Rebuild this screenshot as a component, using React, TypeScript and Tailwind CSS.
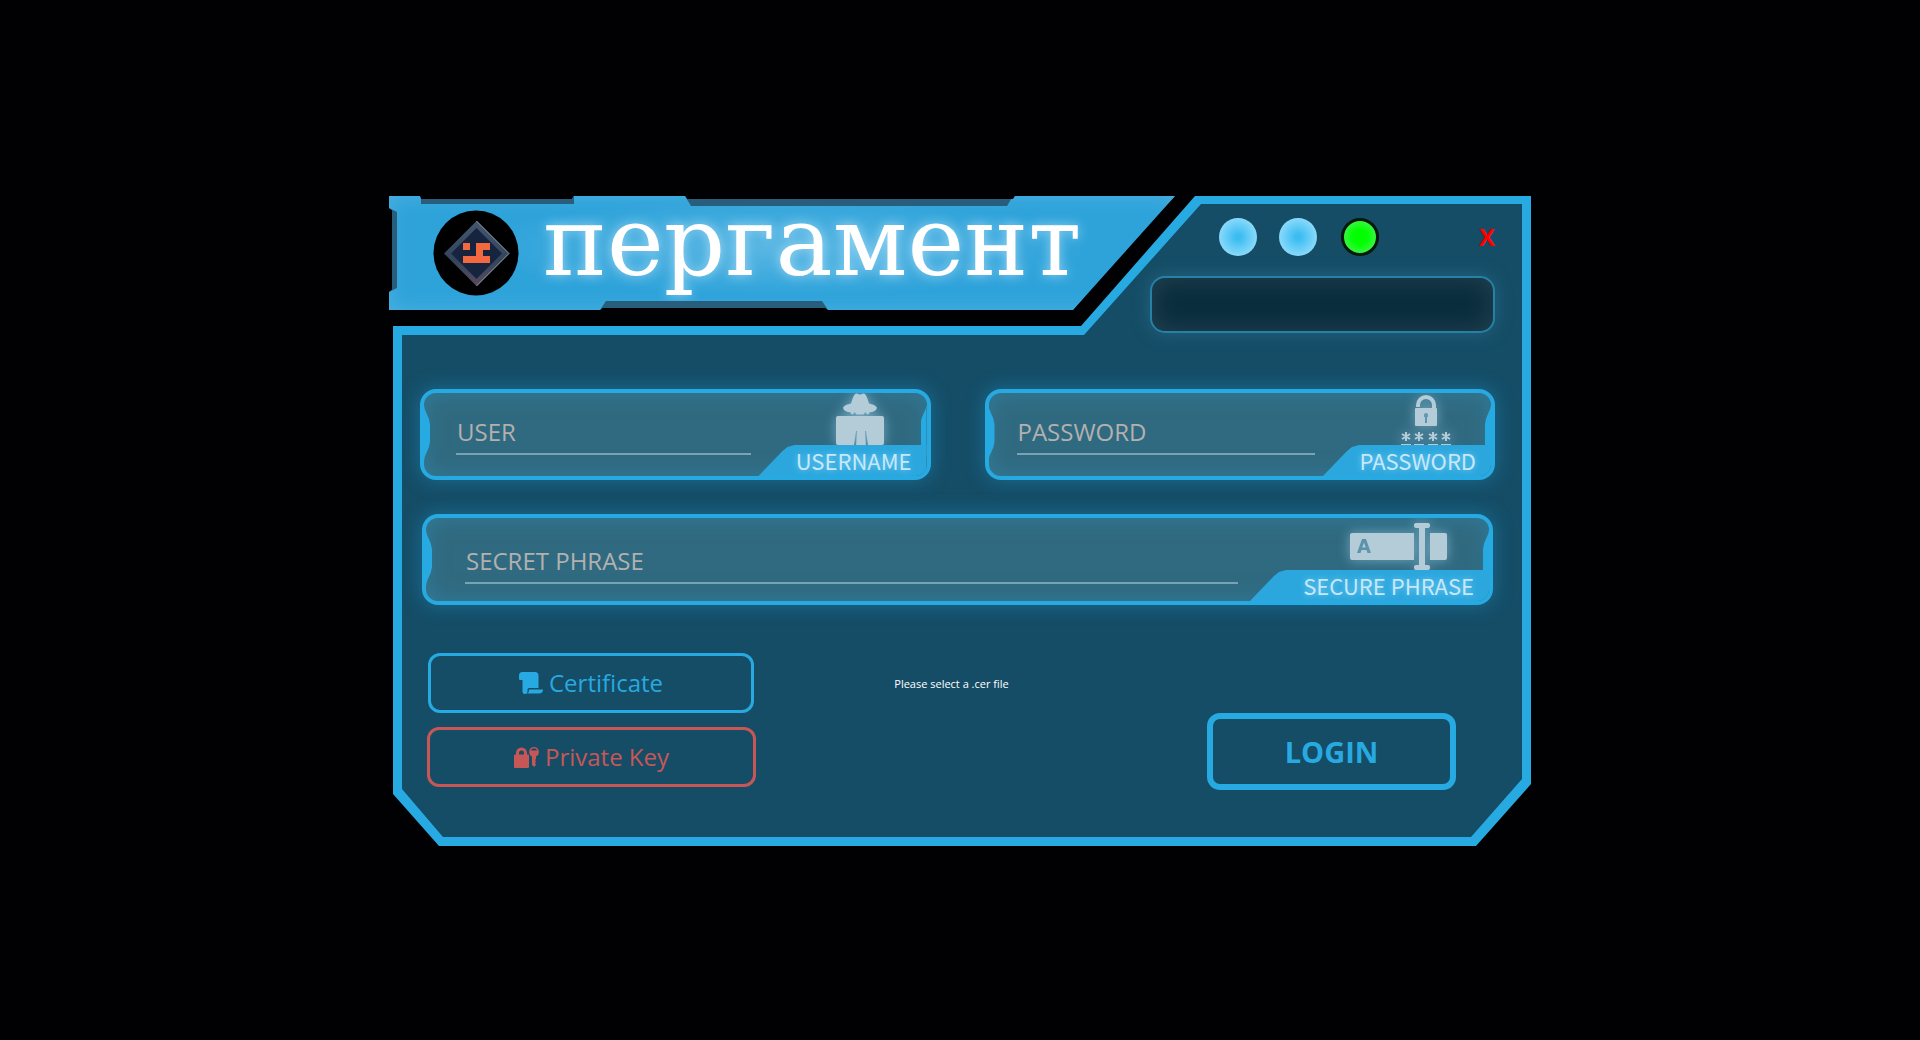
import React from 'react';

const glow = 'fill-[#b4ccd8] drop-shadow-[0_0_6px_rgba(160,210,235,0.6)]';

function LogoMark() {
  return (
    <svg viewBox="0 0 86 86" className="size-[86px] shrink-0" role="img" aria-label="Logo">
      <defs>
        <linearGradient id="rim" x1="0" y1="0" x2="0" y2="1">
          <stop offset="0" stopColor="#44566e" />
          <stop offset="0.6" stopColor="#33455c" />
          <stop offset="1" stopColor="#5a4a5e" />
        </linearGradient>
      </defs>
      <circle cx="43" cy="43" r="42.5" fill="#000" />
      <path d="M43.500 11 76 43.500 43.500 76 11 43.500Z" fill="url(#rim)" />
      <path d="M43.500 11 76 43.500 43.500 76" fill="none" stroke="#9aa6b4" strokeWidth="1" />
      <path d="M43.500 18 69 43.500 43.500 69 18 43.500Z" fill="#16243f" />
      <path d="M30 33h7v7h-7zM43 33h14v7h-7v6h7v7H30v-7h13z" fill="#f4683f" />
    </svg>
  );
}

function SpyIcon() {
  return (
    <svg viewBox="0 0 48 54" className={'h-[54px] w-12 ' + glow} aria-hidden="true">
      <path d="M19 1c2-1.500 3.500.5 5 .5S27-.5 29 1c2 2.500 3 6 4 9.500 3 .8 7 1.800 8 4.500-1 3-4 4-7.500 4.200.3 1.300-.8 2.300-2.500 2.300l-1.500-2.500-2 2.500h-7l-2-2.500-1.500 2.500c-1.700 0-2.800-1-2.500-2.300C11 19 8 18 7 15c1-2.700 5-3.700 8-4.500C16 7 17 3.500 19 1z" />
      <path d="M2 23h44a2 2 0 0 1 2 2v25a2 2 0 0 1-2 2H32l-2-14h-1l1 16H20l1-16h-1l-2 14H2a2 2 0 0 1-2-2V25a2 2 0 0 1 2-2z" />
    </svg>
  );
}

function LockIcon() {
  return (
    <svg viewBox="0 0 52 52" className={'size-[52px] ' + glow} aria-hidden="true">
      <path d="M18 12v-2a8 8 0 0 1 16 0v6" fill="none" stroke="#b4ccd8" strokeWidth="4" />
      <path fillRule="evenodd" d="M16 13h20a1 1 0 0 1 1 1v16a1 1 0 0 1-1 1H16a1 1 0 0 1-1-1V14a1 1 0 0 1 1-1zm10 5a2.500 2.500 0 0 0-1 4.600V28h2v-5.400a2.500 2.500 0 0 0-1-4.600z" />
      <path
        d="M6 37v9M2 39l8 5M10 39l-8 5M19 37v9M15 39l8 5M23 39l-8 5M33 37v9M29 39l8 5M37 39l-8 5M46 37v9M42 39l8 5M50 39l-8 5"
        fill="none"
        stroke="#b4ccd8"
        strokeWidth="2"
      />
      <path d="M1 49h10v2.500H1zM14 49h10v2.500H14zM28 49h10v2.500H28zM41 49h10v2.500H41z" />
    </svg>
  );
}

function PhraseIcon() {
  return (
    <svg viewBox="0 0 98 48" className={'h-12 w-[98px] ' + glow} aria-hidden="true">
      <path fillRule="evenodd" d="M2 10h62v27H2a2 2 0 0 1-2-2V12a2 2 0 0 1 2-2zm10 6L7 30h3.500l1-3h5l1 3H21l-5-14zm2 3.500 1.800 5h-3.600z" />
      <path d="M80 10h15a2 2 0 0 1 2 2v23a2 2 0 0 1-2 2H80z" />
      <path d="M66 0h12a2 2 0 0 1 2 2v1a2 2 0 0 1-2 2h-3v37h3a2 2 0 0 1 2 2v1a2 2 0 0 1-2 2H66a2 2 0 0 1-2-2v-1a2 2 0 0 1 2-2h3V5h-3a2 2 0 0 1-2-2V2a2 2 0 0 1 2-2z" />
    </svg>
  );
}

function ScrollIcon() {
  return (
    <svg viewBox="0 0 24 22" className="h-[22px] w-6 fill-current" aria-hidden="true">
      <path d="M3.500 0H16a3.500 3.500 0 0 1 3.500 3.500V16H10a1.500 1.500 0 0 0-1.500 1.500V19a2.500 2.500 0 0 1-5 1V8H1a1 1 0 0 1-1-1V3.500A3.500 3.500 0 0 1 3.500 0z" />
      <path d="M10 17.500h14a4 4 0 0 1-4 4H8c1.500-.5 2-1.500 2-4z" />
    </svg>
  );
}

function KeyLockIcon() {
  return (
    <svg viewBox="0 0 25 21" className="h-[21px] w-[25px] fill-current" aria-hidden="true">
      <path d="M1 7.500h1V6a5.500 5.500 0 0 1 11 0v1.500h1a1 1 0 0 1 1 1V20a1 1 0 0 1-1 1H1a1 1 0 0 1-1-1V8.500a1 1 0 0 1 1-1zm4 0h5V6a2.500 2.500 0 0 0-5 0z" />
      <path fillRule="evenodd" d="M20 0a5 5 0 0 1 2 9.500V12l-1 1 1 1.500-1 1.500 1 1.500L20.500 20 18 18V9.500A5 5 0 0 1 20 0zm-3 3.500h6c-.5-1.500-1.500-2.200-3-2.200s-2.500.7-3 2.200z" />
    </svg>
  );
}

type FieldProps = {
  id: string;
  caption: string;
  placeholder: string;
  type?: string;
  inputClass: string;
  tabClass: string;
  iconClass: string;
  icon: React.ReactNode;
};

function Field({ id, caption, placeholder, type = 'text', inputClass, tabClass, iconClass, icon }: FieldProps) {
  return (
    <div className="relative flex h-[91px] overflow-hidden rounded-[16px] border-4 border-[#27a9e1] bg-[#306a80] shadow-[0_0_18px_2px_rgba(30,140,190,0.45),inset_0_0_22px_rgba(50,135,170,0.6)]">
      <span className="absolute top-3 left-0 h-[56px] w-1.5 bg-[#27a9e1] [clip-path:polygon(0_0,15%_8%,80%_24%,100%_34%,100%_66%,80%_76%,15%_92%,0_100%)]" />
      <span className="absolute top-3 right-0 h-[50px] w-1.5 bg-[#27a9e1] [clip-path:polygon(100%_0,85%_8%,20%_26%,0_38%,0_100%,100%_100%)]" />
      <div className={'min-w-0 flex-1 ' + inputClass}>
        <input
          id={id}
          type={type}
          placeholder={placeholder}
          className="h-[42px] w-full border-b-2 border-[#78a3b5] bg-transparent px-px pb-1 text-[24px] text-white outline-none placeholder:text-[#b3b1b0]"
        />
      </div>
      <div className={'flex shrink-0 flex-col justify-between ' + tabClass}>
        <div className={'flex h-[52px] justify-end ' + iconClass}>{icon}</div>
        <label
          htmlFor={id}
          className="block h-[31px] bg-[#2ba7de] pr-[15px] text-right font-['Noto_Sans_CJK_SC',sans-serif] text-[22px] leading-[30px] text-[#c5e9fb] [clip-path:polygon(0_100%,24px_6px,29px_2px,36px_0,100%_0,100%_100%)] [text-shadow:0_0_6px_rgba(190,235,255,0.6)]"
        >
          {caption}
        </label>
      </div>
    </div>
  );
}

function Banner() {
  return (
    <div className="relative flex h-[114px] min-w-0 flex-1 items-center bg-[#2ea3da] bg-[radial-gradient(ellipse_at_50%_45%,#5ab7e3_0%,transparent_55%)] pl-11 shadow-[inset_0_0_20px_#4db0e0] [clip-path:polygon(0_0,31px_0,32px_3px,183px_3px,185px_0,296px_0,298px_3px,calc(100%-162px)_3px,calc(100%-160px)_0,100%_0,calc(100%-102px)_100%,calc(100%-347px)_100%,calc(100%-349px)_112px,213px_112px,211px_100%,0_100%,0_96px,3px_94px,3px_14px,0_12px)]">
      <span className="absolute top-0 left-8 h-[8px] w-[153px] bg-[#285d7b]" />
      <span className="absolute top-0 right-[162px] left-[296px] h-[10px] bg-[#285d7b] [clip-path:polygon(0_0,100%_0,calc(100%-6px)_100%,6px_100%)]" />
      <span className="absolute right-[347px] bottom-0 left-[211px] h-[9px] bg-[#285d7b] [clip-path:polygon(6px_0,calc(100%-6px)_0,100%_100%,0_100%)]" />
      <span className="absolute top-3 left-0 h-[84px] w-2 bg-[#285d7b] [clip-path:polygon(0_0,100%_4px,100%_calc(100%-4px),0_100%)]" />
      <LogoMark />
      <h1 className="ml-6 pb-[22px] font-['DejaVu_Serif',serif] text-[96px] leading-[100px] text-white [text-shadow:0_0_12px_rgba(200,235,255,0.7)]">
        пергамент
      </h1>
    </div>
  );
}

export default function App() {
  return (
    <main className="flex min-h-screen items-center justify-center bg-[#010103] pt-0.5 font-['Open_Sans',sans-serif]">
      <form className="relative w-full max-w-[1142px]" onSubmit={(e) => e.preventDefault()}>
        <div className="absolute inset-0 bg-[#27a9e1] [clip-path:polygon(4px_130px,calc(100%-450px)_130px,calc(100%-336px)_0,100%_0,100%_calc(100%-62px),calc(100%-55px)_100%,50px_100%,4px_calc(100%-52px))]">
          <div className="size-full bg-[#154d66] [clip-path:polygon(13px_139px,calc(100%-447px)_139px,calc(100%-330px)_8px,calc(100%-9px)_8px,calc(100%-9px)_calc(100%-67px),calc(100%-60px)_calc(100%-9px),54px_calc(100%-9px),13px_calc(100%-57px))]" />
        </div>

        <div className="relative">
          <header className="flex">
            <Banner />
            <div className="-ml-[25px] w-[381px] pt-[22px] pr-9">
              <div className="flex items-center pl-[69px]">
                <span className="size-[38px] rounded-full bg-[radial-gradient(circle,#3cbdf2_10%,#8fdcfb_75%)]" />
                <span className="ml-[22px] size-[38px] rounded-full bg-[radial-gradient(circle,#3cbdf2_10%,#8fdcfb_75%)]" />
                <span className="ml-6 size-[38px] rounded-full border-[3px] border-[#04180c] bg-[radial-gradient(circle,#00ff00_30%,#3cf545_75%)]" />
                <button type="button" aria-label="Close" className="ml-auto text-[24px] leading-9 font-bold text-[#ff0000]">
                  X
                </button>
              </div>
              <output className="mt-5 block h-[57px] rounded-[15px] border-2 border-[#2581a6] bg-[#0a2d3e] shadow-[0_0_18px_rgba(70,140,175,0.35),inset_0_0_26px_rgba(45,75,85,0.75)]" />
            </div>
          </header>

          <div className="mt-14 pr-9 pl-[31px]">
            <div className="grid grid-cols-2 gap-[54px]">
              <Field
                id="user"
                caption="USERNAME"
                placeholder="USER"
                inputClass="pt-5 pl-8 pr-2"
                tabClass="w-[168px]"
                iconClass="pr-[43px]"
                icon={<SpyIcon />}
              />
              <Field
                id="password"
                caption="PASSWORD"
                placeholder="PASSWORD"
                type="password"
                inputClass="pt-5 pl-7 pr-2"
                tabClass="w-[168px]"
                iconClass="pr-[39px] pt-0.5"
                icon={<LockIcon />}
              />
            </div>
            <div className="mx-0.5 mt-[34px]">
              <Field
                id="phrase"
                caption="SECURE PHRASE"
                placeholder="SECRET PHRASE"
                inputClass="pt-6 pl-[39px] pr-3"
                tabClass="w-[239px]"
                iconClass="pr-[41px] pt-[5px]"
                icon={<PhraseIcon />}
              />
            </div>
          </div>

          <div className="mt-12 flex items-start pr-[75px] pb-14 pl-[38px]">
            <div className="flex w-[329px] flex-col gap-[14px] text-[24px]">
              <button
                type="button"
                className="mr-0.5 ml-px flex h-[60px] items-center justify-center gap-1.5 rounded-[12px] border-[3px] border-[#27a9e1] text-[#27a9e1]"
              >
                <ScrollIcon />
                Certificate
              </button>
              <button
                type="button"
                className="flex h-[60px] items-center justify-center gap-1.5 rounded-[12px] border-[3px] border-[#c75757] text-[#c75757]"
              >
                <KeyLockIcon />
                Private Key
              </button>
            </div>
            <p className="mt-[22px] flex-1 pr-[60px] text-center text-[11px] leading-[18px] text-white">Please select a .cer file</p>
            <button
              type="submit"
              className="mt-[60px] h-[77px] w-[249px] rounded-[13px] border-[6px] border-[#27a9e1] text-[29px] leading-9 font-bold text-[#27a9e1]"
            >
              LOGIN
            </button>
          </div>
        </div>
      </form>
    </main>
  );
}
